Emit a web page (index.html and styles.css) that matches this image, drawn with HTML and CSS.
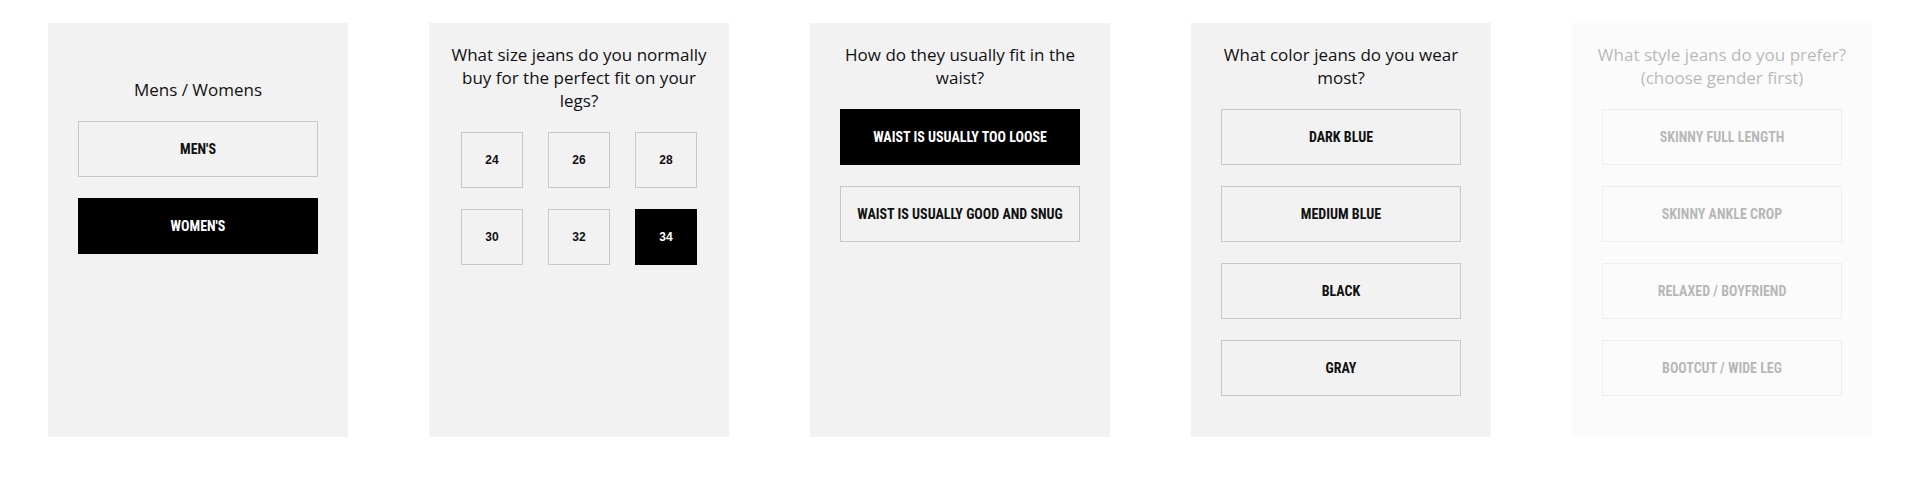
FILE: index.html
```html
<!DOCTYPE html>
<html>
<head>
<meta charset="utf-8">
<link rel="stylesheet" href="styles.css">
</head>
<body>
<div class="row">
  <div class="card card-first">
    <h2 class="title">Mens / Womens</h2>
    <div class="options">
      <div class="opt">MEN'S</div>
      <div class="opt sel">WOMEN'S</div>
    </div>
  </div>
  <div class="card">
    <h2 class="title">What size jeans do you normally buy for the perfect fit on your legs?</h2>
    <div class="sizes">
      <div class="opt">24</div>
      <div class="opt">26</div>
      <div class="opt">28</div>
      <div class="opt">30</div>
      <div class="opt">32</div>
      <div class="opt sel">34</div>
    </div>
  </div>
  <div class="card">
    <h2 class="title">How do they usually fit in the waist?</h2>
    <div class="options">
      <div class="opt sel">WAIST IS USUALLY TOO LOOSE</div>
      <div class="opt">WAIST IS USUALLY GOOD AND SNUG</div>
    </div>
  </div>
  <div class="card">
    <h2 class="title">What color jeans do you wear most?</h2>
    <div class="options">
      <div class="opt">DARK BLUE</div>
      <div class="opt">MEDIUM BLUE</div>
      <div class="opt">BLACK</div>
      <div class="opt">GRAY</div>
    </div>
  </div>
  <div class="card disabled">
    <h2 class="title">What style jeans do you prefer? (choose gender first)</h2>
    <div class="options">
      <div class="opt">SKINNY FULL LENGTH</div>
      <div class="opt">SKINNY ANKLE CROP</div>
      <div class="opt">RELAXED / BOYFRIEND</div>
      <div class="opt">BOOTCUT / WIDE LEG</div>
    </div>
  </div>
</div>
</body>
</html>
```
FILE: styles.css
```css
html, body {
  margin: 0;
  padding: 0;
  background: #ffffff;
}
body {
  font-family: "Open Sans", "Liberation Sans", sans-serif;
}
.row {
  display: flex;
  gap: 81px;
  padding: 23px 48px 0 48px;
}
.card {
  width: 300px;
  height: 414px;
  box-sizing: border-box;
  background: #f2f2f2;
  padding: 20px 30px 0 30px;
}
.card-first {
  padding-top: 55px;
}
.disabled {
  opacity: 0.3;
}
.title {
  margin: 0 -12px 20px -12px;
  font-weight: 400;
  font-size: 17px;
  line-height: 23px;
  color: #111;
  text-align: center;
}
.options {
  display: flex;
  flex-direction: column;
  gap: 21px;
}
.opt {
  box-sizing: border-box;
  height: 56px;
  border: 1px solid #c8c8c8;
  display: flex;
  align-items: center;
  justify-content: center;
  font-family: "Liberation Sans Narrow", "Roboto Condensed", "Liberation Sans", sans-serif;
  font-weight: 700;
  font-size: 14px;
  color: #111;
}
.opt.sel {
  background: #000;
  border-color: #000;
  color: #fff;
}
.sizes {
  display: grid;
  grid-template-columns: repeat(3, 62px);
  column-gap: 25px;
  row-gap: 21px;
  justify-content: center;
}
.sizes .opt {
  font-family: "Liberation Sans", Arial, sans-serif;
  font-size: 12px;
}
```
